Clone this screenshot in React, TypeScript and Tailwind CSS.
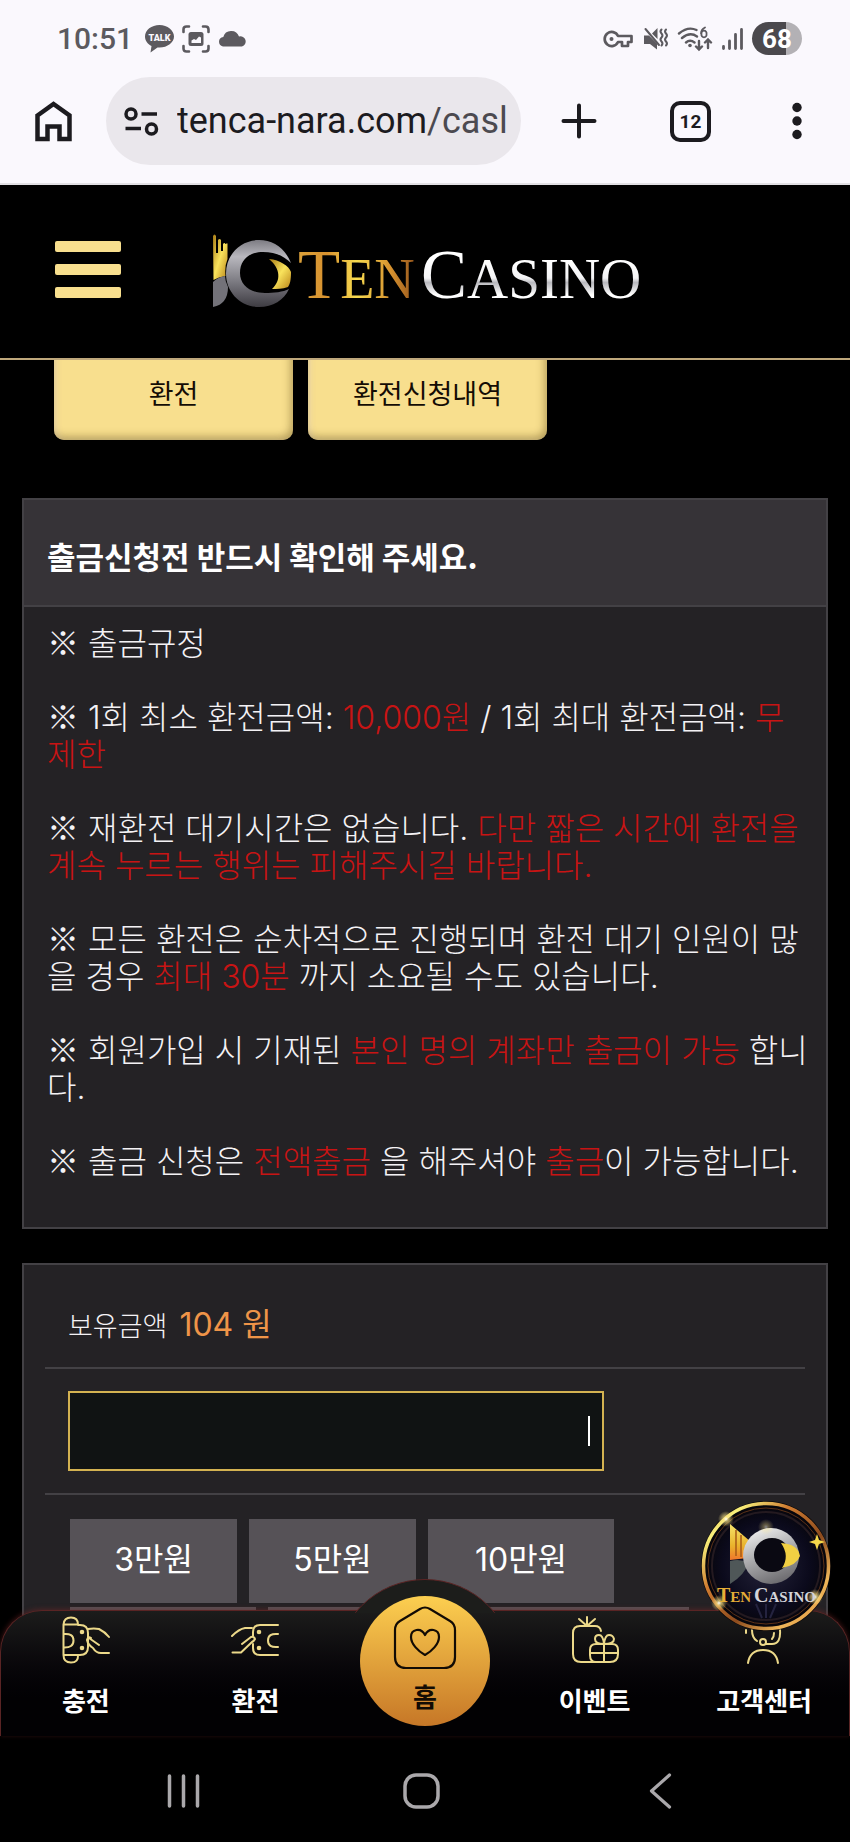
import type { ReactNode } from "react";

const kr = "font-['Noto_Sans_CJK_KR',sans-serif]";
const body = "font-['Inter','Noto_Sans_CJK_KR',sans-serif]";

function Red({ children }: { children: ReactNode }) {
  return <span className="text-[#c81414]">{children}</span>;
}

const rules: ReactNode[] = [
  <>출금규정</>,
  <>
    1회 최소 환전금액: <Red>10,000원</Red> / 1회 최대 환전금액: <Red>무제한</Red>
  </>,
  <>
    재환전 대기시간은 없습니다. <Red>다만 짧은 시간에 환전을 계속 누르는 행위는 피해주시길 바랍니다.</Red>
  </>,
  <>
    모든 환전은 순차적으로 진행되며 환전 대기 인원이 많을 경우 <Red>최대 30분</Red> 까지 소요될 수도 있습니다.
  </>,
  <>
    회원가입 시 기재된 <Red>본인 명의 계좌만 출금이 가능</Red> 합니다.
  </>,
  <>
    출금 신청은 <Red>전액출금</Red> 을 해주셔야 <Red>출금</Red>이 가능합니다.
  </>,
];

function StatusBar() {
  return (
    <div className="flex h-[77px] items-center justify-between pl-[57px] pr-12 text-[#5c5a5f]">
      <div className="flex items-center gap-2">
        <span className="w-20 font-['Roboto',sans-serif] text-[30px] font-medium leading-none">10:51</span>
        <svg width="29" height="28" viewBox="0 0 29 28" aria-hidden="true">
          <path d="M14.5 0C6.5 0 0 5 0 11.500c0 4 2.600 7.500 6.500 9.500L5.500 27.500l7-5h2c8 0 14.500-5 14.500-11S22.500 0 14.500 0z" fill="currentColor" />
          <text x="14.5" y="15.500" textAnchor="middle" fontFamily="Roboto" fontSize="9" fontWeight="900" fill="#faf8fd">TALK</text>
        </svg>
        <svg width="28" height="28" viewBox="0 0 28 28" fill="none" stroke="currentColor" strokeWidth="2.600" strokeLinecap="round" aria-hidden="true">
          <path d="M1.500 7V4.500q0-3 3-3H7M21 1.500h2.500q3 0 3 3V7M26.500 21v2.500q0 3-3 3H21M7 26.500H4.500q-3 0-3-3V21" />
          <rect x="6.500" y="7" width="15" height="14" rx="2.500" fill="currentColor" stroke="none" />
          <path d="M9.500 18v-2.500l2.500-1.500 2 1 3-3.500 2 1V18z" fill="#faf8fd" stroke="none" />
        </svg>
        <svg width="29" height="17" viewBox="0 0 29 17" aria-hidden="true">
          <path d="M5 16.500a4.800 4.800 0 0 1 .3-9.500A8.200 8.200 0 0 1 21 6.500a5 5 0 0 1 3 10z" fill="currentColor" />
        </svg>
      </div>
      <div className="flex items-center gap-[9px]">
        <svg width="31" height="18" viewBox="0 0 31 18" fill="none" stroke="currentColor" strokeWidth="2.700" aria-hidden="true">
          <path d="M15 6a7 7 0 1 0 0 6h4v4h6v-4h3.500V6z" strokeLinejoin="round" />
          <circle cx="8.500" cy="9" r="2" fill="currentColor" stroke="none" />
        </svg>
        <svg width="25" height="24" viewBox="0 0 25 24" fill="none" stroke="currentColor" strokeWidth="2" strokeLinecap="round" aria-hidden="true">
          <path d="M1 8.500h5l8 8v6L7 17H1zM9 6.500 14.500 1v11z" fill="currentColor" stroke="none" />
          <path d="M2.500 2 16 18M18.500 2.500q-2 2 0 4t0 4 0 4 0 4M23 2.500q-2 2 0 4t0 4 0 4 0 4" />
        </svg>
        <svg width="36" height="26" viewBox="0 0 36 26" fill="none" stroke="currentColor" strokeWidth="2.400" strokeLinecap="round" aria-hidden="true">
          <path d="M2 7.500Q11 0 19.500 4M5 12q8-6.500 15-1.500M9 16.500q4-3.500 8.500 0M22 15v8m-3-2.500 3 3 3-3M31 22v-8m-3 2.500 3-3 3 3" />
          <circle cx="13" cy="19.500" r="1.800" fill="currentColor" stroke="none" />
          <path d="M28 1.500q-4 2-4 6M24.500 8a2.600 2.600 0 1 0 5 0 2.600 2.600 0 1 0-5 0" strokeWidth="1.800" />
        </svg>
        <svg width="21" height="22" viewBox="0 0 21 22" stroke="currentColor" strokeWidth="2.800" strokeLinecap="round" aria-hidden="true">
          <path d="M1.500 18.500v2M7.500 13v7.500M13.500 6.500v14M19.500 1.500v19" />
        </svg>
        <span className="flex h-[33px] w-[50px] items-center justify-center rounded-full bg-linear-to-r from-[#4b494d] from-68% to-[#b3b1b5] to-68% font-['Roboto',sans-serif] text-[26px] font-bold leading-none text-white">
          68
        </span>
      </div>
    </div>
  );
}

function BrowserBar() {
  return (
    <div className="flex h-[108px] items-start border-b-2 border-[#e2e0e4] pl-[35px] pr-10 text-[#1c1b1f]">
      <button type="button" aria-label="홈 화면" className="mt-6">
        <svg width="37" height="41" viewBox="0 0 37 41" fill="none" stroke="currentColor" strokeWidth="4.500">
          <path d="M2.500 14.500 18.500 3l16 11.500v23.500H24.500V25.500h-12V38H2.500z" />
        </svg>
      </button>
      <div className="ml-[34px] flex h-[88px] min-w-0 flex-1 items-center rounded-full bg-[#eae7ec] pl-[18px] pr-2">
        <svg width="35" height="29" viewBox="0 0 35 29" fill="none" stroke="currentColor" strokeWidth="3.500" className="shrink-0" aria-hidden="true">
          <circle cx="7" cy="7" r="5" />
          <circle cx="27.500" cy="22" r="5" />
          <path d="M17.500 7H33M1.500 21.500H17" />
        </svg>
        <span className="ml-[18px] overflow-hidden whitespace-nowrap font-['Roboto',sans-serif] text-[36px] leading-[44px]">
          tenca-nara.com<span className="text-[#4c4a50]">/casl</span>
        </span>
      </div>
      <button type="button" aria-label="새 탭" className="ml-10 mt-6">
        <svg width="36" height="40" viewBox="0 0 36 40" stroke="currentColor" strokeWidth="4" strokeLinecap="round">
          <path d="M2.500 20h31M18 4.500v31" />
        </svg>
      </button>
      <button
        type="button"
        className="ml-[73px] mt-6 flex size-[41px] items-center justify-center rounded-[10px] border-4 border-[#1c1b1f] font-['Roboto',sans-serif] text-[19px] font-bold leading-none"
      >
        12
      </button>
      <button type="button" aria-label="메뉴" className="ml-[73px] mt-6 px-2">
        <svg width="10" height="40" viewBox="0 0 10 40" fill="currentColor">
          <circle cx="5" cy="6.500" r="4.700" />
          <circle cx="5" cy="20" r="4.700" />
          <circle cx="5" cy="33.500" r="4.700" />
        </svg>
      </button>
    </div>
  );
}

function Logo() {
  return (
    <svg width="440" height="92" viewBox="0 0 440 92" role="img" aria-label="Ten Casino">
      <defs>
        <linearGradient id="steel" x1="0" y1="0" x2="0" y2="1">
          <stop offset="0" stopColor="#7d7c83" />
          <stop offset="0.25" stopColor="#b9b8be" />
          <stop offset="0.6" stopColor="#7f7e85" />
          <stop offset="1" stopColor="#3e3c42" />
        </linearGradient>
        <linearGradient id="gold" x1="0" y1="0" x2="1" y2="1">
          <stop offset="0" stopColor="#a87b14" />
          <stop offset="0.5" stopColor="#f9e35c" />
          <stop offset="1" stopColor="#b98418" />
        </linearGradient>
        <linearGradient id="ten" x1="0" y1="0" x2="1" y2="0">
          <stop offset="0" stopColor="#dba13a" />
          <stop offset="0.25" stopColor="#d8922f" />
          <stop offset="0.5" stopColor="#f8dc50" />
          <stop offset="0.8" stopColor="#d5902e" />
          <stop offset="1" stopColor="#96561c" />
        </linearGradient>
        <linearGradient id="casino" x1="0" y1="0" x2="0" y2="1">
          <stop offset="0.3" stopColor="#ffffff" />
          <stop offset="0.54" stopColor="#f4f4f6" />
          <stop offset="0.6" stopColor="#b9b9be" />
          <stop offset="0.76" stopColor="#ffffff" />
        </linearGradient>
      </defs>
      <path d="M1 7q1.500-3 3 0v17h2V11q1.500-2 3 0v11h2v-7q1.500-2 2.500 0h1v-1q1 0 1 1v15q-3 7-2 17-7 1-12 4z" fill="url(#gold)" />
      <path d="M1 53q5-5 12-6 0 5 3 11 0 17-15 20z" fill="#737279" />
      <path
        d="M79 34C73 19 61 11 47 11 28 11 14 26 14 44.500S28 78 47 78c14 0 25-7 30-18-6 3-15 4-24 4-15 0-25-8-25-20 0-13 9-21 23-21 12 0 21 4 28 11z"
        fill="url(#steel)"
      />
      <path d="M57 30c11 1 20 7 22 13-0 8-1 12-3 15-6 2-11 2-16 2 9-8 9-20-3-30z" fill="url(#gold)" />
      <text x="86" y="69" fontFamily="Liberation Serif" fill="url(#ten)">
        <tspan fontSize="69">T</tspan>
        <tspan fontSize="56">EN</tspan>
      </text>
      <text x="209" y="69" fontFamily="Liberation Serif" fill="url(#casino)">
        <tspan fontSize="69">C</tspan>
        <tspan fontSize="57">ASINO</tspan>
      </text>
    </svg>
  );
}

function SiteHeader() {
  return (
    <header className="relative z-10 flex h-[175px] items-start border-b-2 border-[#bfa87c] bg-black pl-[55px]">
      <button type="button" aria-label="전체 메뉴" className="mt-14 flex w-[66px] flex-col gap-3">
        <span className="h-[11px] w-full rounded-xs bg-[#f8df8e]" />
        <span className="h-[11px] w-full rounded-xs bg-[#f8df8e]" />
        <span className="h-[11px] w-full rounded-xs bg-[#f8df8e]" />
      </button>
      <a href="#" className="ml-[91px] mt-11">
        <Logo />
      </a>
    </header>
  );
}

function Tab({ children }: { children: ReactNode }) {
  return (
    <button
      type="button"
      className="h-[94px] w-[239px] rounded-[10px] bg-[#f8df8e] text-[27px] text-[#140c04] shadow-[inset_-2px_-3px_8px_rgba(90,70,20,0.45),inset_3px_0_5px_rgba(255,235,200,0.6)]"
    >
      {children}
    </button>
  );
}

function AmountButton({ children, className = "" }: { children: ReactNode; className?: string }) {
  return (
    <button type="button" className={`h-[84px] bg-[#565257] pb-[2px] text-[32px] leading-none text-white ${className}`}>
      {children}
    </button>
  );
}

function NavItem({ label, children }: { label: string; children: ReactNode }) {
  return (
    <a href="#" className="flex flex-1 flex-col items-center pt-[5px] text-[#ecd98a]">
      <svg width="48" height="48" viewBox="0 0 48 48" fill="none" stroke="currentColor" strokeWidth="2" strokeLinecap="round" strokeLinejoin="round" aria-hidden="true">
        {children}
      </svg>
      <span className="mt-[18px] text-[26px] font-bold leading-9 text-white">{label}</span>
    </a>
  );
}

function BottomNav() {
  return (
    <nav className="relative flex h-[126px] rounded-t-[42px] border border-b-0 border-[#5a2424] bg-linear-to-b from-[#1c1c1b] to-[#020103] to-70% shadow-[0_-1px_5px_rgba(120,40,40,0.5)]">
      {/* raised rim behind the home button */}
      <div className="absolute bottom-full left-1/2 -mb-[2px] h-[34px] w-[180px] -translate-x-1/2 overflow-hidden">
        <div className="size-[180px] rounded-full border border-[#5a2424] bg-[#1c1d1b]" />
      </div>
      <NavItem label="충전">
        <path d="M1.500 8.500V39q0 7.500 7.500 7.500t7-7.500H1.500M1.500 8.500Q2 1.500 9 1.500t7 7H1.500M16 9h2q8 0 8 8v14q0 8-8 8h-2M1.500 18q10-1 10 6.500t-10 7" />
        <path d="M26 13q6-1 11 0 6 3 10 8M27 22l10 7M25 24q1 5 6 8 3 5 8 5h8M25 24q1-4 4-2" />
        <circle cx="20" cy="16" r="1.300" fill="currentColor" />
        <circle cx="20" cy="32" r="1.300" fill="currentColor" />
      </NavItem>
      <NavItem label="환전">
        <path d="M47 9H29q-7 0-7 7v4M47 39H29q-7 0-7-7v-4M47 18q-10-1-10 6.500t10 6.500" />
        <path d="M21 12h-7Q8 13 1 20M11 28l9-7q3-1 4 2-1 2-3 3L10 36.500H1.500" />
        <circle cx="28" cy="16" r="1.300" fill="currentColor" />
        <circle cx="28" cy="32" r="1.300" fill="currentColor" />
      </NavItem>
      <div className="relative flex-1">
        <a
          href="#"
          className="absolute -top-[15px] left-1/2 flex size-[130px] -translate-x-1/2 flex-col items-center rounded-full bg-linear-to-b from-[#fccf50] to-[#c67727] pt-2.5 text-[#120b04]"
        >
          <svg width="64" height="64" viewBox="0 0 64 64" fill="none" stroke="currentColor" strokeWidth="2.200" strokeLinejoin="round" aria-hidden="true">
            <path d="M27 3q5-3 10 0l20 12q5 3 5 9v27q0 11-11 11H13Q2 62 2 51V24q0-6 5-9z" />
            <path d="M32 49C25 45 18 38 18 31c0-8 10-10 14-2 4-8 14-6 14 2 0 7-7 14-14 18z" />
          </svg>
          <span className="mt-2 text-[26px] font-bold leading-9">홈</span>
        </a>
      </div>
      <NavItem label="이벤트">
        <path d="M30 15q-1-5-6-5H9q-7 0-7 7v21q0 8 8 8h29q8 0 8-8v-4q0-6-6-6H25q-6 0-6 6v5q0 7 6 7M33 28v18M16 10V1M16 10 8 3M16 10l8-7M11 10h10" />
        <path d="M33 28q-9 0-9-5 0-4 4-4t5 9q1-9 5-9t5 4q0 5-10 5M20 37h26" />
      </NavItem>
      <NavItem label="고객센터">
        <path d="M8 47q2-13 15-13t15 13M40 14q1 14-8 14h-6M12 14q0 8 5 11M34 17q0 4-2 6M6 14v3" />
        <circle cx="23" cy="26" r="3" />
      </NavItem>
    </nav>
  );
}

function FloatingBadge() {
  return (
    <a href="#" className="absolute -top-[110px] right-[18px] z-10 block size-[132px]">
      <svg viewBox="0 0 132 132" role="img" aria-label="Ten Casino">
        <defs>
          <linearGradient id="ring" x1="0" y1="0" x2="1" y2="1">
            <stop offset="0" stopColor="#c9702a" />
            <stop offset="0.16" stopColor="#f9f07a" />
            <stop offset="0.35" stopColor="#cf7c31" />
            <stop offset="0.6" stopColor="#8d4b1d" />
            <stop offset="0.8" stopColor="#eeb65a" />
            <stop offset="1" stopColor="#d8812f" />
          </linearGradient>
          <radialGradient id="night">
            <stop offset="0" stopColor="#24233a" />
            <stop offset="0.7" stopColor="#0b0a1c" />
            <stop offset="1" stopColor="#060509" />
          </radialGradient>
          <linearGradient id="moon" x1="0.2" y1="0" x2="0.6" y2="1">
            <stop offset="0" stopColor="#f2f2f2" />
            <stop offset="0.5" stopColor="#aaaaac" />
            <stop offset="1" stopColor="#6c6b6f" />
          </linearGradient>
          <linearGradient id="flame" x1="0" y1="0" x2="0" y2="1">
            <stop offset="0" stopColor="#f6e36b" />
            <stop offset="0.6" stopColor="#e9b32c" />
            <stop offset="1" stopColor="#f0762c" />
          </linearGradient>
          <radialGradient id="glow">
            <stop offset="0" stopColor="#ffffff" />
            <stop offset="0.3" stopColor="#ffe98a" stopOpacity="0.7" />
            <stop offset="1" stopColor="#ffe98a" stopOpacity="0" />
          </radialGradient>
        </defs>
        <circle cx="66" cy="66" r="65" fill="#080608" />
        <circle cx="66" cy="66" r="62.500" fill="url(#night)" stroke="url(#ring)" strokeWidth="3.500" />
        <circle cx="66" cy="66" r="58" fill="none" stroke="#5d3218" strokeWidth="1" />
        <circle cx="66" cy="66" r="54" fill="none" stroke="#241a20" strokeWidth="2" />
        <path d="M62 118 56 104M66 118v-14M70 118l6-14" stroke="#24233f" strokeWidth="2" />
        <path d="M30 24 51 42q-4 8-3 16l-18 2z" fill="url(#flame)" />
        <path d="M36 30v26M41 35v22" stroke="#a75a16" strokeWidth="1.500" />
        <path d="M30 61q10-3 18 2-3 12-18 21z" fill="#4f5758" />
        <circle cx="71" cy="56" r="28" fill="url(#moon)" />
        <ellipse cx="72" cy="55" rx="18" ry="17" fill="#0a0912" />
        <path d="M81 43q17 1 19 13-3 9-18 12 8-12-1-25z" fill="#f1cf43" />
        <circle cx="26" cy="19" r="8" fill="url(#glow)" />
        <circle cx="66" cy="27" r="8" fill="url(#glow)" opacity="0.5" />
        <path d="m117 34 2 6 6 2-6 2-2 6-2-6-6-2 6-2z" fill="#f6d84b" />
        <circle cx="115" cy="97" r="8" fill="url(#glow)" />
        <circle cx="19" cy="103" r="8" fill="url(#glow)" />
        <g fontFamily="Liberation Serif" fontWeight="700">
          <text x="17" y="102" fill="#e4ad37">
            <tspan fontSize="20">T</tspan>
            <tspan fontSize="15">EN</tspan>
          </text>
          <text x="54" y="102" fill="#d4d4da">
            <tspan fontSize="20">C</tspan>
            <tspan fontSize="15">ASINO</tspan>
          </text>
        </g>
      </svg>
    </a>
  );
}

function SystemNav() {
  return (
    <div className="grid h-[106px] grid-cols-[1fr_54px_1fr] items-center bg-black pr-2 pt-1 text-[#aaa8ab]">
      <button type="button" aria-label="최근 앱" className="ml-[167px] justify-self-start">
        <svg width="33" height="34" viewBox="0 0 33 34" stroke="currentColor" strokeWidth="3.500" strokeLinecap="round">
          <path d="M2.500 2v30M16.500 2v30M30.500 2v30" />
        </svg>
      </button>
      <button type="button" aria-label="홈" className="justify-self-center">
        <svg width="37" height="36" viewBox="0 0 37 36" fill="none" stroke="currentColor" strokeWidth="3.500">
          <rect x="2" y="2" width="33" height="32" rx="11" />
        </svg>
      </button>
      <button type="button" aria-label="뒤로" className="mr-[170px] justify-self-end">
        <svg width="23" height="36" viewBox="0 0 23 36" fill="none" stroke="currentColor" strokeWidth="3.200" strokeLinecap="round" strokeLinejoin="round">
          <path d="M20.500 2 2.500 18l18 16" />
        </svg>
      </button>
    </div>
  );
}

export default function App() {
  return (
    <div className={`relative flex h-screen flex-col overflow-hidden bg-black ${kr}`}>
      <div className="shrink-0 bg-[#faf8fd]">
        <StatusBar />
        <BrowserBar />
      </div>

      <div className="shrink-0">
        <SiteHeader />
      </div>

      <main className="min-h-0 flex-1 overflow-hidden px-[22px]">
        {/* Tabs, scrolled partly under the header */}
        <div className="-mt-3.5 flex gap-[15px] px-8">
          <Tab>환전</Tab>
          <Tab>환전신청내역</Tab>
        </div>

        {/* Withdrawal rules */}
        <section className="mt-[58px] border-2 border-[#434145] bg-[#242225] text-[#f4f2f5]">
          <h2 className="border-b-2 border-[#434145] bg-[#363337] px-[23px] pb-7 pt-[35px] text-[31px] font-bold leading-[42px] text-white">
            출금신청전 반드시 확인해 주세요.
          </h2>
          <div className={`flex flex-col gap-[37px] break-all pb-[47px] pl-[23px] pr-[18px] pt-[18px] text-[32px] font-light leading-[37px] ${body}`}>
            {rules.map((rule, i) => (
              <p key={i}>
                <span className={`leading-none ${kr}`}>※</span> {rule}
              </p>
            ))}
          </div>
        </section>

        {/* Amount form */}
        <section className={`mt-[34px] border-2 border-[#434145] bg-[#242225] px-[21px] text-[#f4f2f5] ${body}`}>
          <div className="flex h-[104px] items-baseline gap-3 border-b-2 border-[#434145] px-[23px] pt-9">
            <label htmlFor="amount" className="text-[27px] font-light leading-[48px]">보유금액</label>
            <span className="text-[32px] leading-[48px] text-[#ef9448]">104 원</span>
          </div>
          <div className="border-b-2 border-[#434145] px-[23px] py-[22px]">
            <div className="relative w-[536px]">
              <input
                id="amount"
                type="text"
                inputMode="numeric"
                className="block h-20 w-full border-2 border-[#d3b251] bg-[#101313] pl-4 pr-3.5 text-right text-[32px] text-white outline-none"
              />
              <span className="absolute right-3.5 top-[25px] h-[30px] w-[2px] bg-white" />
            </div>
          </div>
          <div className="flex flex-wrap gap-x-3 gap-y-1 px-[25px] pt-6">
            <AmountButton className="w-[167px]">3만원</AmountButton>
            <AmountButton className="w-[167px]">5만원</AmountButton>
            <AmountButton className="w-[186px]">10만원</AmountButton>
            <AmountButton className="w-[186px]">30만원</AmountButton>
            <AmountButton className="w-[186px]">50만원</AmountButton>
            <AmountButton className="w-[223px]">100만원</AmountButton>
          </div>
        </section>
      </main>

      <div className="absolute inset-x-0 bottom-0 z-20">
        <FloatingBadge />
        <BottomNav />
        <SystemNav />
      </div>
    </div>
  );
}
